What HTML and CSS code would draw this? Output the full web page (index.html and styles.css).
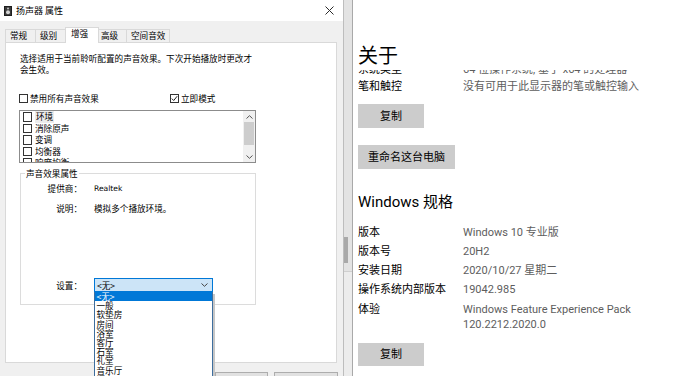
FILE: index.html
```html
<!DOCTYPE html>
<html lang="zh-CN">
<head>
<meta charset="utf-8">
<title>扬声器 属性</title>
<link rel="stylesheet" href="styles.css">
</head>
<body>
<div class="screen">
  <div class="dialog">
    <div class="titlebar">
      <svg class="app-icon" width="8" height="10" viewBox="0 0 8 10"><rect x="0.5" y="0.5" width="7" height="9" fill="#3a3a3a" stroke="#1e1e1e"/><circle cx="4" cy="6.2" r="2" fill="#d4d4d4"/><circle cx="4" cy="2.5" r="0.9" fill="#d4d4d4"/></svg>
      <span class="title">扬声器 属性</span>
      <svg class="close" width="9" height="9" viewBox="0 0 9 9"><path d="M0.5 0.5 L8.5 8.5 M8.5 0.5 L0.5 8.5" stroke="#2a2a2a" stroke-width="1" fill="none"/></svg>
    </div>
    <div class="tabs">
      <div class="tab">常规</div>
      <div class="tab">级别</div>
      <div class="tab selected">增强</div>
      <div class="tab">高级</div>
      <div class="tab">空间音效</div>
    </div>
    <div class="panel">
      <p class="desc">选择适用于当前聆听配置的声音效果。下次开始播放时更改才会生效。</p>
      <div class="options">
        <label class="check first"><span class="box"></span>禁用所有声音效果</label>
        <label class="check"><span class="box"><svg width="7" height="7" viewBox="0 0 7 7"><path d="M0.8 3.6 L2.7 5.5 L6.2 1.2" stroke="#222" stroke-width="1" fill="none"/></svg></span>立即模式</label>
      </div>
      <div class="listbox">
        <ul class="items">
          <li><span class="box"></span><span class="focus">环境</span></li>
          <li><span class="box"></span>消除原声</li>
          <li><span class="box"></span>变调</li>
          <li><span class="box"></span>均衡器</li>
          <li><span class="box"></span>响度均衡</li>
        </ul>
        <div class="vscroll">
          <div class="arrow"><svg width="7" height="4" viewBox="0 0 7 4"><path d="M0.5 3.5 L3.5 0.7 L6.5 3.5" stroke="#555" stroke-width="1" fill="none"/></svg></div>
          <div class="thumb"></div>
          <div class="track"></div>
          <div class="arrow"><svg width="7" height="4" viewBox="0 0 7 4"><path d="M0.5 0.5 L3.5 3.3 L6.5 0.5" stroke="#555" stroke-width="1" fill="none"/></svg></div>
        </div>
      </div>
      <fieldset class="group">
        <legend class="legend">声音效果属性</legend>
        <div class="prop">
          <div class="prop-label">提供商：</div>
          <div class="prop-value latin">Realtek</div>
        </div>
        <div class="prop">
          <div class="prop-label">说明：</div>
          <div class="prop-value">模拟多个播放环境。</div>
        </div>
        <div class="prop setting">
          <div class="prop-label">设置：</div>
          <div class="combo-wrap">
            <div class="combo"><span>&lt;无&gt;</span><svg width="7" height="4" viewBox="0 0 7 4"><path d="M0.5 0.5 L3.5 3.3 L6.5 0.5" stroke="#444" stroke-width="1" fill="none"/></svg></div>
            <ul class="dropdown">
              <li class="active">&lt;无&gt;</li>
              <li>一般</li>
              <li>软垫房</li>
              <li>房间</li>
              <li>浴室</li>
              <li>客厅</li>
              <li>石室</li>
              <li>礼堂</li>
              <li>音乐厅</li>
              <li>洞穴</li>
            </ul>
          </div>
        </div>
      </fieldset>
    </div>
    <div class="buttons">
      <div class="btn"></div>
      <div class="btn wide"></div>
    </div>
  </div>
  <div class="edge">
    <div class="edge-track"><div class="edge-thumb"></div></div>
  </div>
  <div class="settings">
    <h1 class="heading">关于</h1>
    <div class="clip">
      <div class="row clipped"><span class="label">系统类型</span><span class="value">64 位操作系统, 基于 x64 的处理器</span></div>
    </div>
    <div class="row pen"><span class="label">笔和触控</span><span class="value">没有可用于此显示器的笔或触控输入</span></div>
    <div class="sbtn copy">复制</div>
    <div class="sbtn rename">重命名这台电脑</div>
    <h2 class="subheading">Windows 规格</h2>
    <div class="specs">
      <span class="label">版本</span><span class="value">Windows 10 专业版</span>
      <span class="label">版本号</span><span class="value">20H2</span>
      <span class="label">安装日期</span><span class="value">2020/10/27 星期二</span>
      <span class="label">操作系统内部版本</span><span class="value">19042.985</span>
      <span class="label">体验</span><span class="value">Windows Feature Experience Pack<br>120.2212.2020.0</span>
    </div>
    <div class="sbtn copy copy2">复制</div>
  </div>
</div>
</body>
</html>
```
FILE: styles.css
```css
html, body {
  margin: 0;
  padding: 0;
  background: #ffffff;
}
body {
  width: 690px;
  height: 376px;
  overflow: hidden;
}
.screen {
  display: flex;
  height: 376px;
}

/* ---------- dialog ---------- */
.dialog {
  width: 343px;
  flex: none;
  height: 376px;
  overflow: hidden;
  background: #f0f0f0;
  display: flex;
  flex-direction: column;
  font-family: "Noto Sans CJK SC", sans-serif;
  font-size: 8.6px;
  color: #000;
}
.titlebar {
  height: 21px;
  flex: none;
  background: #ffffff;
  display: flex;
  align-items: center;
  padding: 0 9px 0 4px;
}
.app-icon { flex: none; }
.title {
  margin-left: 4px;
  font-size: 9px;
  line-height: 12px;
}
.close { margin-left: auto; flex: none; }

.tabs {
  display: flex;
  align-items: flex-end;
  height: 16px;
  margin-top: 6px;
  margin-bottom: -1px;
  padding-left: 5px;
  flex: none;
}
.tab {
  box-sizing: border-box;
  height: 13px;
  min-width: 31px;
  margin-bottom: 1px;
  padding: 0 4px;
  border: 1px solid #d9d9d9;
  border-bottom: 0;
  background: #f0f0f0;
  line-height: 11px;
  white-space: nowrap;
}
.tab + .tab { margin-left: -1px; }
.tab.selected {
  height: 16px;
  margin: 0 -2px 0 -1px;
  min-width: 34px;
  padding: 0 4px 0 5px;
  background: #ffffff;
  position: relative;
  z-index: 1;
}

.panel {
  box-sizing: border-box;
  width: 332px;
  height: 321px;
  margin-left: 5px;
  flex: none;
  background: #ffffff;
  border: 1px solid #d9d9d9;
  padding: 9.5px 0 0 13px;
}
.desc {
  margin: 0 0 0 1px;
  width: 236px;
  line-height: 11px;
}
.options {
  display: flex;
  margin-top: 18px;
  height: 11px;
}
.check {
  display: flex;
  align-items: center;
  line-height: 11px;
}
.check.first { width: 151px; }
.box {
  box-sizing: border-box;
  width: 9px;
  height: 9px;
  border: 1px solid #333333;
  background: #ffffff;
  margin-right: 2px;
  flex: none;
  display: flex;
  align-items: center;
  justify-content: center;
}

.listbox {
  box-sizing: border-box;
  margin-top: 6.5px;
  width: 237px;
  height: 53px;
  border: 1px solid #8c8c8c;
  background: #ffffff;
  display: flex;
  overflow: hidden;
}
.items {
  list-style: none;
  margin: 0;
  padding: 0 0 0 2.5px;
  flex: 1;
}
.items li {
  height: 11.6px;
  display: flex;
  align-items: center;
  line-height: 11.6px;
}
.items .box {
  width: 9.5px;
  height: 9.5px;
  margin-right: 3px;
}
.focus {
  background: #ececec;
  padding: 0 1px;
}
.vscroll {
  width: 12px;
  flex: none;
  background: #f0f0f0;
  display: flex;
  flex-direction: column;
}
.arrow {
  height: 11px;
  display: flex;
  align-items: center;
  justify-content: center;
  flex: none;
}
.thumb {
  height: 23px;
  margin: 0 1px;
  background: #cdcdcd;
  flex: none;
}
.track { flex: 1; }

.group {
  box-sizing: border-box;
  margin: 4.5px 0 0 1px;
  width: 236px;
  height: 137.5px;
  border: 1px solid #dcdcdc;
  padding: 4px 0 0 0;
  min-width: 0;
}
.legend {
  padding: 0 1px;
  margin-left: 4px;
  line-height: 11px;
}
.prop {
  display: flex;
  align-items: center;
  height: 11px;
  line-height: 11px;
}
.prop + .prop { margin-top: 9px; }
.prop.setting {
  margin-top: 64.5px;
  height: 14px;
}
.prop-label {
  width: 61px;
  text-align: right;
  margin-right: 12px;
  flex: none;
}
.latin {
  font-family: "DejaVu Sans", sans-serif;
  font-size: 7.6px;
}
.combo-wrap {
  position: relative;
  width: 119px;
}
.combo {
  box-sizing: border-box;
  height: 14px;
  border: 1px solid #0078d7;
  background: #cce4f7;
  display: flex;
  align-items: center;
  justify-content: space-between;
  padding: 0 4px 0 2px;
}
.dropdown {
  position: absolute;
  top: 100%;
  left: 0;
  box-sizing: border-box;
  width: 119px;
  margin: 0;
  padding: 0;
  list-style: none;
  background: #ffffff;
  border: 1px solid #3e6e9e;
  border-top: 0;
  box-shadow: 2px 2px 0 #c6c6c6;
  z-index: 5;
}
.dropdown li {
  height: 9.2px;
  line-height: 9.2px;
  padding-left: 1.5px;
}
.dropdown li.active {
  background: #0078d7;
  color: #ffffff;
}

.buttons {
  display: flex;
  justify-content: flex-end;
  gap: 6px;
  margin-top: 9px;
  padding-right: 5px;
  flex: none;
}
.btn {
  box-sizing: border-box;
  width: 53px;
  height: 22px;
  background: #e1e1e1;
  border: 1px solid #adadad;
}
.btn.wide { width: 64px; }

/* ---------- edge between windows ---------- */
.edge {
  box-sizing: border-box;
  width: 10px;
  flex: none;
  background: #ececec;
  border-left: 1px solid #bdbdbd;
  border-right: 1px solid #a9a9a9;
}
.edge-track {
  height: 271px;
  background: #e3e3e3;
  border-bottom: 1px solid #cfcfcf;
  display: flex;
  flex-direction: column;
}
.edge-thumb {
  margin-top: 237px;
  width: 4px;
  height: 26px;
  background: #a9a9a9;
}

/* ---------- settings window ---------- */
.settings {
  flex: 1;
  background: #ffffff;
  padding: 43px 0 0 5px;
  font-family: Roboto, "Noto Sans CJK SC", sans-serif;
  font-size: 11px;
  color: #000;
  display: flex;
  flex-direction: column;
  align-items: flex-start;
}
.heading {
  margin: 0;
  font-family: "Noto Sans CJK SC", sans-serif;
  font-size: 20px;
  font-weight: normal;
  line-height: 24px;
}
.clip {
  margin-top: 3px;
  height: 6px;
  overflow: hidden;
  align-self: stretch;
}
.row {
  display: flex;
  line-height: 15px;
}
.row.clipped { margin-top: -8.5px; }
.row .label { width: 105px; flex: none; }
.value { color: #5d5d5d; }
.row.pen { margin-top: 2.5px; }
.sbtn {
  box-sizing: border-box;
  height: 24px;
  background: #cccccc;
  display: flex;
  align-items: center;
  justify-content: center;
  line-height: 15px;
}
.copy {
  width: 66px;
  margin-top: 10.5px;
}
.rename {
  width: 97px;
  margin-top: 17px;
}
.subheading {
  margin: 23px 0 0 0;
  font-size: 15px;
  font-weight: normal;
  line-height: 20px;
}
.specs {
  margin-top: 12.5px;
  display: grid;
  grid-template-columns: 105px auto;
  row-gap: 4.25px;
  line-height: 15px;
}
.copy2 {
  margin-top: 11.5px;
  height: 23px;
}
```
